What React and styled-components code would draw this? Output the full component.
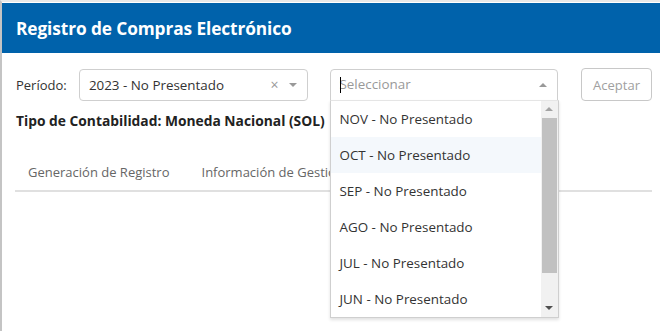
import React from "react";
import styled, { createGlobalStyle } from "styled-components";

const Global = createGlobalStyle`
  html, body { margin: 0; padding: 0; background: #fff; }
  body { font-family: "Open Sans", "Noto Sans", sans-serif; color: #333; overflow: hidden; }
  * { box-sizing: border-box; }
`;

const Frame = styled.div`
  width: 660px;
  height: 331px;
  border-left: 2px solid #c4c4c4;
  border-top: 2px solid #e8e8e8;
  padding-top: 1px;
  background: #fff;
`;

const Header = styled.div`
  height: 50px;
  background: #0062ab;
  display: flex;
  align-items: center;
  padding-left: 14px;
`;

const Title = styled.h1`
  margin: 0;
  color: #fff;
  font-size: 17.3px;
  font-weight: 700;
  letter-spacing: -0.1px;
`;

const Body = styled.div`
  padding: 15px 8px 0 14px;
`;

const FilterRow = styled.div`
  display: flex;
  align-items: center;
  height: 33px;
`;

const Label = styled.span`
  font-size: 13px;
  color: #333;
  width: 63px;
`;

const SelectWrap = styled.div`
  position: relative;
  width: 229px;
  margin-right: ${(p) => p.$mr || 0}px;
`;

const SelectBox = styled.div`
  height: 32px;
  border: 1px solid #cfcfcf;
  border-radius: ${(p) => (p.$open ? "4px 4px 0 0" : "4px")};
  display: flex;
  align-items: center;
  padding: 0 10px 0 9px;
  font-size: 13.4px;
  background: #fff;
`;

const Value = styled.span`
  flex: 1;
  color: ${(p) => (p.$placeholder ? "#999" : "#333")};
  position: relative;
`;

const Caret = styled.span`
  display: inline-block;
  width: 1px;
  height: 16px;
  background: #000;
  vertical-align: middle;
  margin-right: -1px;
  position: relative;
  top: -1px;
`;

const Clear = styled.span`
  color: #999;
  font-size: 14px;
  margin-right: 10px;
  line-height: 1;
`;

const Arrow = styled.span`
  width: 0;
  height: 0;
  border-left: 4px solid transparent;
  border-right: 4px solid transparent;
  ${(p) => (p.$up ? "border-bottom: 4px solid #999;" : "border-top: 4px solid #999;")}
`;

const Button = styled.button`
  height: 33px;
  width: 71px;
  border: 1px solid #c8c8c8;
  border-radius: 4px;
  background: #fff;
  color: #a0a0a0;
  font-family: inherit;
  font-size: 13px;
  padding: 0;
`;

const Info = styled.div`
  font-size: 13.8px;
  font-weight: 700;
  color: #222;
  margin-top: 10px;
  height: 20px;
  line-height: 20px;
`;

const Tabs = styled.div`
  display: flex;
  margin-top: 21px;
  margin-left: -1px;
  border-bottom: 2px solid #e0e0e0;
  height: 40px;
`;

const Tab = styled.div`
  font-size: 13px;
  color: #666;
  padding: 11px 15px 0 13px;
  margin-right: 4px;
  white-space: nowrap;
`;

const Menu = styled.div`
  position: absolute;
  top: 31px;
  left: 0;
  width: 229px;
  height: 218px;
  border: 1px solid #cfcfcf;
  border-top: 1px solid #e5e5e5;
  background: #fff;
  display: flex;
  box-shadow: 0 2px 3px rgba(0, 0, 0, 0.12);
  z-index: 5;
`;

const Options = styled.div`
  flex: 1;
  overflow: hidden;
`;

const Option = styled.div`
  height: 36px;
  display: flex;
  align-items: center;
  padding-left: 9px;
  font-size: 13.4px;
  color: #333;
  background: ${(p) => (p.$active ? "#f4f8fc" : "#fff")};
`;

const Scrollbar = styled.div`
  width: 17px;
  background: #f1f1f1;
  display: flex;
  flex-direction: column;
  align-items: stretch;
`;

const ScrollBtn = styled.div`
  height: 17px;
  display: flex;
  align-items: center;
  justify-content: center;
`;

const ScrollArrow = styled.span`
  width: 0;
  height: 0;
  border-left: 4px solid transparent;
  border-right: 4px solid transparent;
  ${(p) => (p.$up ? "border-bottom: 4px solid #a3a3a3;" : "border-top: 4px solid #505050;")}
`;

const Thumb = styled.div`
  height: 155px;
  margin: 0 1px;
  background: #c1c1c1;
`;

const Spacer = styled.div`
  flex: 1;
`;

const options = [
  "NOV - No Presentado",
  "OCT - No Presentado",
  "SEP - No Presentado",
  "AGO - No Presentado",
  "JUL - No Presentado",
  "JUN - No Presentado",
];

export default function App() {
  return (
    <>
      <Global />
      <Frame>
        <Header>
          <Title>Registro de Compras Electrónico</Title>
        </Header>
        <Body>
          <FilterRow>
            <Label>Período:</Label>
            <SelectWrap $mr={22}>
              <SelectBox>
                <Value>2023 - No Presentado</Value>
                <Clear>×</Clear>
                <Arrow />
              </SelectBox>
            </SelectWrap>
            <SelectWrap $mr={23}>
              <SelectBox $open>
                <Value $placeholder>
                  <Caret />
                  Seleccionar
                </Value>
                <Arrow $up />
              </SelectBox>
              <Menu>
                <Options>
                  {options.map((o, i) => (
                    <Option key={o} $active={i === 1}>
                      {o}
                    </Option>
                  ))}
                </Options>
                <Scrollbar>
                  <ScrollBtn>
                    <ScrollArrow $up />
                  </ScrollBtn>
                  <Thumb />
                  <Spacer />
                  <ScrollBtn>
                    <ScrollArrow />
                  </ScrollBtn>
                </Scrollbar>
              </Menu>
            </SelectWrap>
            <Button>Aceptar</Button>
          </FilterRow>
          <Info>Tipo de Contabilidad: Moneda Nacional (SOL)</Info>
          <Tabs>
            <Tab>Generación de Registro</Tab>
            <Tab>Información de Gestión</Tab>
          </Tabs>
        </Body>
      </Frame>
    </>
  );
}
